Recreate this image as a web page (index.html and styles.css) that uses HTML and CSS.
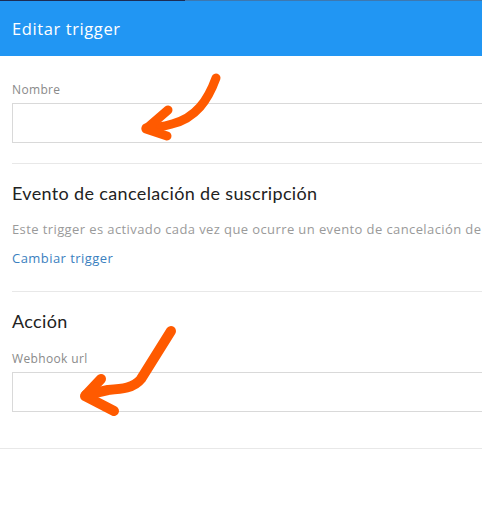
FILE: index.html
```html
<!DOCTYPE html>
<html lang="es">
<head>
    <meta charset="UTF-8">
    <meta name="viewport" content="width=device-width, initial-scale=1.0">
    <title>Editar trigger</title>
    <link rel="stylesheet" href="styles.css">
</head>
<body>
    <div class="modal">
        <div class="top-strip"></div>
        <div class="modal-header">
            <h1>Editar trigger</h1>
        </div>
        <div class="modal-body">
            <div class="section">
                <label class="field-label" for="nombre">Nombre</label>
                <input type="text" id="nombre" class="field-input">
            </div>
            <div class="section">
                <h2>Evento de cancelación de suscripción</h2>
                <p class="description">Este trigger es activado cada vez que ocurre un evento de cancelación de suscripción.</p>
                <a href="#" class="change-link">Cambiar trigger</a>
            </div>
            <div class="section last">
                <h2>Acción</h2>
                <label class="field-label" for="webhook">Webhook url</label>
                <input type="text" id="webhook" class="field-input">
            </div>
        </div>
        <div class="modal-footer"></div>

        <!-- hand-drawn arrows over the screenshot -->
        <svg class="arrows" width="482" height="513" viewBox="0 0 482 513">
            <g fill="none" stroke="#ff5a00" stroke-linecap="round" stroke-linejoin="round">
                <path d="M216 78 C208 100 196 118 172 124 C162 127 154 128 146 128" stroke-width="9"/>
                <path d="M168 110 L146 129 L167 136" stroke-width="9"/>
                <path d="M171 331 L141 379 C134 388 122 389 108 390 L86 395" stroke-width="10"/>
                <path d="M101 379 L85 396 L114 411" stroke-width="10"/>
            </g>
        </svg>
    </div>
</body>
</html>
```

FILE: styles.css
```css
html, body {
    margin: 0;
    padding: 0;
    overflow: hidden;
}
body {
    font-family: "Open Sans", Lato, sans-serif;
    background-color: white;
    color: #333;
}
.modal {
    position: relative;
    width: 482px;
    height: 513px;
}
.top-strip {
    height: 1px;
    background: linear-gradient(to right, #1c2c55 0, #1c2c55 185px, #3d78b0 185px);
}
.modal-header {
    height: 55px;
    background-color: #2196f3;
    display: flex;
    align-items: center;
    padding: 0 12px;
}
.modal-header h1 {
    margin: 0;
    font-size: 16.5px;
    font-weight: 400;
    letter-spacing: 0.6px;
    color: white;
}
.modal-body {
    padding-left: 12px;
    width: 620px;
}
.section {
    border-bottom: 1px solid #e8e8e8;
}
.section:first-child {
    padding: 26px 0 20px;
}
.section:nth-child(2) {
    padding: 17px 0 23px;
}
.section.last {
    padding: 17px 0 36px;
    border-bottom: none;
}
h2 {
    margin: 0;
    font-family: Lato, "Open Sans", sans-serif;
    font-size: 18px;
    font-weight: 400;
    line-height: 24px;
    letter-spacing: 0.35px;
    color: #222;
}
.field-label {
    display: block;
    font-size: 12px;
    line-height: 16px;
    letter-spacing: 0.35px;
    color: #8a8a8a;
}
.section.last .field-label {
    margin-top: 18px;
}
.field-input {
    display: block;
    box-sizing: border-box;
    width: 600px;
    height: 40px;
    margin-top: 5px;
    border: 1px solid #d9d9d9;
    border-radius: 0;
    outline: none;
    background: white;
}
.description {
    margin: 15px 0 0;
    font-size: 13px;
    line-height: 18px;
    letter-spacing: 0.4px;
    color: #9a9a9a;
    white-space: nowrap;
}
.change-link {
    display: inline-block;
    margin-top: 11px;
    font-size: 13px;
    line-height: 18px;
    letter-spacing: 0.45px;
    color: #3b7fc0;
    text-decoration: none;
}
.modal-footer {
    border-top: 1px solid #e8e8e8;
}
.arrows {
    position: absolute;
    left: 0;
    top: 0;
    pointer-events: none;
}
```
